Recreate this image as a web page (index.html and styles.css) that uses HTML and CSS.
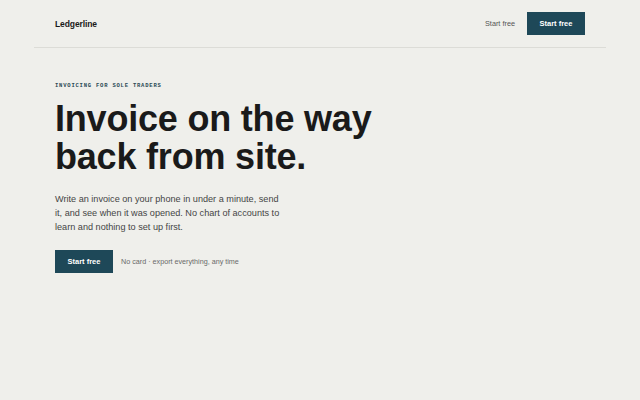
FILE: index.html
```html
<!DOCTYPE html>
<html lang="en">
<head>
<meta charset="utf-8">
<title>Ledgerline</title>
<link rel="stylesheet" href="styles.css">
</head>
<body>
<div class="page">
  <header class="nav">
    <div class="logo">Ledgerline</div>
    <div class="nav-actions">
      <a class="nav-link" href="#">Start free</a>
      <a class="btn btn-nav" href="#">Start free</a>
    </div>
  </header>
  <main class="hero">
    <p class="eyebrow">INVOICING FOR SOLE TRADERS</p>
    <h1 class="title">Invoice on the way<br>back from site.</h1>
    <p class="lead">Write an invoice on your phone in under a minute, send it, and see when it was opened. No chart of accounts to learn and nothing to set up first.</p>
    <div class="cta">
      <a class="btn btn-main" href="#">Start free</a>
      <span class="note">No card · export everything, any time</span>
    </div>
  </main>
</div>
</body>
</html>
```
FILE: styles.css
```css
* { box-sizing: border-box; }
html, body { margin: 0; padding: 0; }
body {
  background: #efefeb;
  font-family: "Liberation Sans", Arial, sans-serif;
  color: #1a1a1a;
}
a { text-decoration: none; }
.page {
  width: 572px;
  margin: 0 auto;
}
.nav {
  height: 48px;
  padding: 0 21px;
  display: flex;
  align-items: center;
  justify-content: space-between;
  border-bottom: 1px solid #dcdcd7;
}
.logo {
  font-size: 8.5px;
  font-weight: 700;
  color: #1a1a1a;
  letter-spacing: -0.1px;
}
.nav-actions {
  display: flex;
  align-items: center;
  gap: 12px;
}
.nav-link {
  font-size: 7.3px;
  color: #555;
}
.btn {
  display: inline-flex;
  align-items: center;
  justify-content: center;
  background: #1e4858;
  color: #fff;
  font-weight: 700;
  font-size: 7.5px;
  height: 23px;
}
.btn-nav { width: 58px; }
.hero {
  padding: 32px 21px 0;
}
.eyebrow {
  margin: 0;
  font-family: "Liberation Mono", "DejaVu Sans Mono", monospace;
  font-size: 5.5px;
  letter-spacing: 0.8px;
  color: #2a4a55;
  font-weight: 700;
  line-height: 12px;
}
.title {
  margin: 8px 0 0;
  font-size: 36px;
  line-height: 38px;
  font-weight: 700;
  letter-spacing: -0.2px;
  color: #1a1a1a;
}
.lead {
  margin: 16px 0 0;
  width: 232px;
  font-size: 9.15px;
  line-height: 14px;
  color: #454545;
}
.cta {
  margin-top: 16px;
  display: flex;
  align-items: center;
  gap: 8px;
}
.btn-main { width: 58px; }
.note {
  font-size: 7.2px;
  color: #6a6a6a;
}
```
